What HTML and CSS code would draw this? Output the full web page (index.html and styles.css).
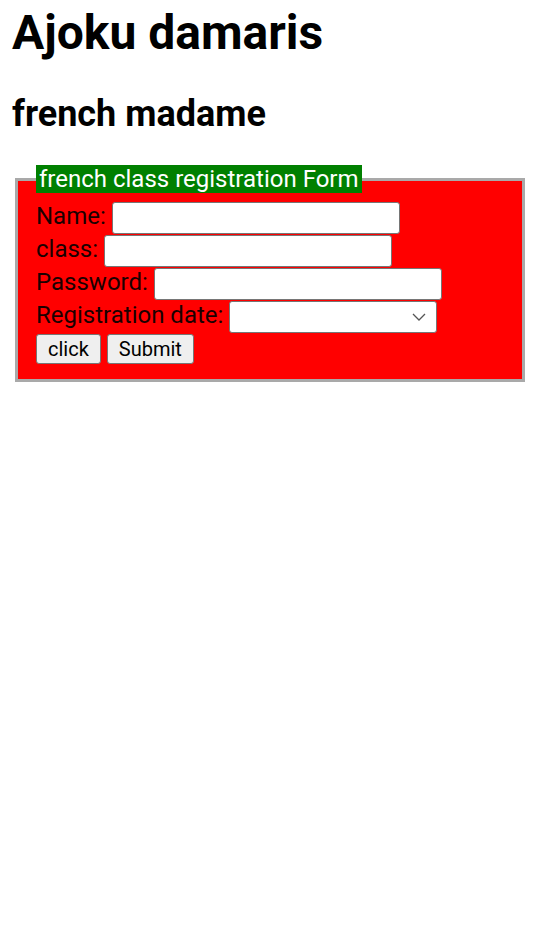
FILE: index.html
```
<!DOCTYPE html>
<html lang="en">

<head>
    <meta charset="UTF-8">
    <meta name="viewport" content="width=device-width, initial-scale=1.0">
    <title>french madame</title>
    <link rel="stylesheet" href="styles.css">
</head>

<body>
    <h1>Ajoku damaris</h1>
    <h2>french madame</h2>

    <form>
        <fieldset class="registro">
            <legend>french class registration Form</legend>
            <label for="name">Name:</label> <input type="text" id="name" class="campo"><br>
            <label for="clase">class:</label> <input type="text" id="clase" class="campo"><br>
            <label for="pass">Password:</label> <input type="password" id="pass" class="campo"><br>
            <label for="fecha">Registration date:</label> <select id="fecha" class="fecha">
                <option></option>
            </select><br>
            <button type="button" class="boton">click</button> <button type="submit" class="boton">Submit</button>
        </fieldset>
    </form>
</body>

</html>
```
FILE: styles.css
```
body {
    margin: 4px 12px 12px;
    font-family: Roboto, "Liberation Sans", sans-serif;
    font-size: 24px;
    color: #000;
    background-color: #fff;
}

h1 {
    font-size: 48px;
    margin: 0 0 32px;
}

h2 {
    font-size: 36px;
    margin: 0 0 30px;
}

.registro {
    background-color: red;
    border: 3px solid #a9a9a9;
    margin: 0 3px;
    padding: 8px 18px 14px;
    line-height: 28px;
}

.registro legend {
    background-color: green;
    color: white;
    padding: 0 3px;
}

.registro label {
    color: #1a0000;
}

.campo {
    width: 288px;
    height: 32px;
    box-sizing: border-box;
    border: 1.5px solid #767676;
    border-radius: 3px;
    background-color: #fff;
    font-size: 20px;
    padding: 0 3px;
    vertical-align: middle;
    margin: 0.5px 0;
}

.fecha {
    width: 208px;
    height: 32px;
    box-sizing: border-box;
    border: 1.5px solid #767676;
    border-radius: 3px;
    background-color: #fff;
    font-size: 20px;
    vertical-align: middle;
    appearance: none;
    -webkit-appearance: none;
    background-image: url("data:image/svg+xml;utf8,<svg xmlns='http://www.w3.org/2000/svg' width='14' height='8' viewBox='0 0 14 8'><path d='M1 1l6 6 6-6' fill='none' stroke='%23555' stroke-width='1.3'/></svg>");
    background-repeat: no-repeat;
    background-position: right 10px center;
    margin: 0.5px 0;
}

.boton {
    font-family: Roboto, "Liberation Sans", sans-serif;
    font-size: 20px;
    height: 30px;
    padding: 0 11px;
    background-color: #efefef;
    border: 1.5px solid #767676;
    border-radius: 3px;
    color: #000;
    vertical-align: middle;
    margin: 1px 0;
}

.boton:first-child {
    margin-right: 2px;
}
```
